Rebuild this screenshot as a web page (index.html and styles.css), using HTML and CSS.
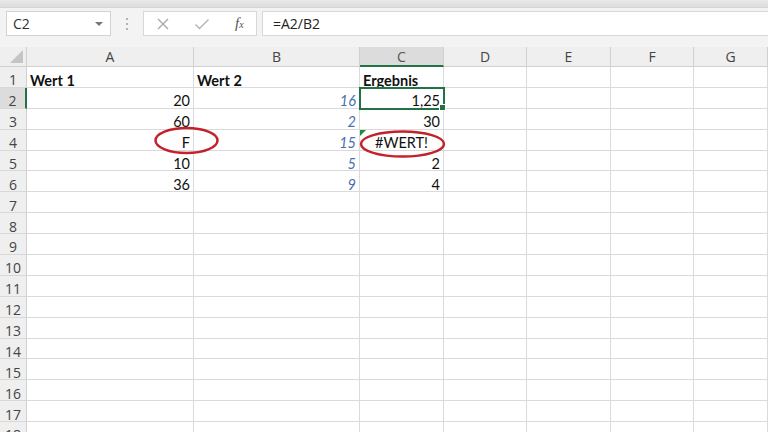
FILE: index.html
```html
<!DOCTYPE html>
<html lang="de">
  <head>
    <meta charset="UTF-8" />
    <meta name="viewport" content="width=device-width, initial-scale=1.0" />
    <title>Mappe1 - Excel</title>
    <link rel="stylesheet" href="styles.css">
  </head>

  <body>
    <div class="top-strip"></div>
    <div class="formula-bar">
      <div class="name-box">
        <span>C2</span>
        <span class="caret"></span>
      </div>
      <div class="grip">
        <span></span><span></span><span></span>
      </div>
      <div class="fx-buttons">
        <svg class="btn-icon" width="14" height="14" viewBox="0 0 14 14">
          <path d="M2 2 L12 12 M12 2 L2 12" stroke="#a6a6a6" stroke-width="1.3" fill="none" />
        </svg>
        <svg class="btn-icon" width="16" height="14" viewBox="0 0 16 14">
          <path d="M1.5 7.5 L5.5 11.5 L14.5 2.5" stroke="#b3b3b3" stroke-width="1.4" fill="none" />
        </svg>
        <span class="fx">f<small>x</small></span>
      </div>
      <div class="formula-input">=A2/B2</div>
    </div>

    <div class="sheet" id="sheet">
      <div class="corner"><span></span></div>
      <div class="col-head">A</div>
      <div class="col-head">B</div>
      <div class="col-head selected">C</div>
      <div class="col-head">D</div>
      <div class="col-head">E</div>
      <div class="col-head">F</div>
      <div class="col-head">G</div>

      <div class="row-head">1</div>
      <div class="cell bold">Wert 1</div>
      <div class="cell bold">Wert 2</div>
      <div class="cell bold">Ergebnis</div>
      <div class="cell"></div><div class="cell"></div><div class="cell"></div><div class="cell"></div>

      <div class="row-head selected">2</div>
      <div class="cell num">20</div>
      <div class="cell num blue">16</div>
      <div class="cell num active">1,25</div>
      <div class="cell"></div><div class="cell"></div><div class="cell"></div><div class="cell"></div>

      <div class="row-head">3</div>
      <div class="cell num">60</div>
      <div class="cell num blue">2</div>
      <div class="cell num">30</div>
      <div class="cell"></div><div class="cell"></div><div class="cell"></div><div class="cell"></div>

      <div class="row-head">4</div>
      <div class="cell num">F</div>
      <div class="cell num blue">15</div>
      <div class="cell center error">#WERT!</div>
      <div class="cell"></div><div class="cell"></div><div class="cell"></div><div class="cell"></div>

      <div class="row-head">5</div>
      <div class="cell num">10</div>
      <div class="cell num blue">5</div>
      <div class="cell num">2</div>
      <div class="cell"></div><div class="cell"></div><div class="cell"></div><div class="cell"></div>

      <div class="row-head">6</div>
      <div class="cell num">36</div>
      <div class="cell num blue">9</div>
      <div class="cell num">4</div>
      <div class="cell"></div><div class="cell"></div><div class="cell"></div><div class="cell"></div>
    </div>

    <svg class="marks" width="768" height="432" viewBox="0 0 768 432">
      <ellipse cx="186.5" cy="140.5" rx="31" ry="12.5" />
      <ellipse cx="402.5" cy="144" rx="41.5" ry="12.5" />
    </svg>

    <script>
      // empty rows 7..18
      const sheet = document.getElementById("sheet");
      for (let r = 7; r <= 18; r++) {
        const head = document.createElement("div");
        head.className = "row-head";
        head.textContent = r;
        sheet.appendChild(head);
        for (let c = 0; c < 7; c++) {
          const cell = document.createElement("div");
          cell.className = "cell";
          sheet.appendChild(cell);
        }
      }
    </script>
  </body>
</html>
```

FILE: styles.css
```css
body {
  margin: 0;
  padding: 0;
  width: 768px;
  height: 432px;
  overflow: hidden;
  background-color: #fff;
  font-family: "Open Sans", "Noto Sans", sans-serif;
  position: relative;
}

.top-strip {
  height: 8px;
  background: linear-gradient(#e9e9e9, #dcdcdc);
  border-bottom: 1px solid #d6d6d6;
  box-sizing: border-box;
}

.formula-bar {
  height: 39px;
  background-color: #f3f3f3;
  display: flex;
  align-items: flex-start;
  padding: 3px 0 0 6px;
  box-sizing: border-box;
}

.name-box {
  width: 105px;
  height: 25px;
  background: #fff;
  border: 1px solid #d2d2d2;
  box-sizing: border-box;
  display: flex;
  align-items: center;
  justify-content: space-between;
  padding: 0 7px 0 6px;
  font-size: 14px;
  color: #333;
}

.caret {
  width: 0;
  height: 0;
  border-left: 4px solid transparent;
  border-right: 4px solid transparent;
  border-top: 4px solid #777;
}

.grip {
  width: 32px;
  height: 25px;
  display: flex;
  flex-direction: column;
  align-items: center;
  justify-content: center;
  gap: 3px;
}

.grip span {
  width: 2px;
  height: 2px;
  background: #b5b5b5;
}

.fx-buttons {
  width: 114px;
  height: 25px;
  background: #fff;
  border: 1px solid #d8d8d8;
  box-sizing: border-box;
  display: flex;
  align-items: center;
  padding-left: 12px;
}

.btn-icon {
  margin-right: 24px;
}

.fx {
  font-family: "Liberation Serif", serif;
  font-style: italic;
  font-size: 15px;
  color: #555;
  margin-left: 1px;
}

.fx small {
  font-size: 10px;
}

.formula-input {
  flex: 1;
  height: 25px;
  margin-left: 5px;
  background: #fff;
  border: 1px solid #d8d8d8;
  border-right: none;
  box-sizing: border-box;
  padding-left: 10px;
  font-size: 14px;
  line-height: 23px;
  color: #222;
}

.sheet {
  display: grid;
  grid-template-columns: 27px 167px 166px 84px 83px 84px 83px 1fr;
  grid-template-rows: 20px;
  grid-auto-rows: 20.9px;
}

.corner {
  background: #efefef;
  border-right: 1px solid #d0d0d0;
  border-bottom: 1px solid #d0d0d0;
  box-sizing: border-box;
  position: relative;
}

.corner span {
  position: absolute;
  right: 3px;
  bottom: 3px;
  width: 0;
  height: 0;
  border-left: 13px solid transparent;
  border-bottom: 13px solid #c4c4c4;
}

.col-head {
  background: #efefef;
  border-right: 1px solid #d0d0d0;
  border-bottom: 1px solid #d0d0d0;
  box-sizing: border-box;
  text-align: center;
  font-size: 14px;
  line-height: 20px;
  color: #444;
}

.col-head.selected {
  background: #dcdcdc;
  border-bottom: 2px solid #217346;
  color: #555;
}

.row-head {
  background: #efefef;
  border-right: 1px solid #d0d0d0;
  border-bottom: 1px solid #d8d8d8;
  box-sizing: border-box;
  display: flex;
  align-items: flex-end;
  justify-content: center;
  font-size: 14px;
  line-height: 0.9;
  color: #444;
}

.row-head.selected {
  background: #dcdcdc;
  border-right: 2px solid #217346;
}

.cell {
  border-right: 1px solid #dadada;
  border-bottom: 1px solid #dadada;
  box-sizing: border-box;
  display: flex;
  align-items: flex-end;
  padding: 0 3px;
  font-family: Lato, "Liberation Sans", sans-serif;
  font-size: 14.5px;
  line-height: 0.85;
  color: #111;
  white-space: nowrap;
}

.cell.bold {
  font-weight: bold;
}

.cell.num {
  justify-content: flex-end;
}

.cell.center {
  justify-content: center;
}

.cell.blue {
  color: #4a6fae;
  font-style: italic;
}

.cell.active {
  position: relative;
  outline: 2px solid #217346;
  outline-offset: -1px;
}

.cell.active::after {
  content: "";
  position: absolute;
  right: -3px;
  bottom: -3px;
  width: 5px;
  height: 5px;
  background: #217346;
  border: 1px solid #fff;
}

.cell.error {
  position: relative;
}

.cell.error::before {
  content: "";
  position: absolute;
  left: 0;
  top: 0;
  width: 0;
  height: 0;
  border-top: 6px solid #1e8a3c;
  border-right: 6px solid transparent;
}

.marks {
  position: absolute;
  left: 0;
  top: 0;
  pointer-events: none;
}

.marks ellipse {
  fill: none;
  stroke: #c3212b;
  stroke-width: 2.5;
}
```
